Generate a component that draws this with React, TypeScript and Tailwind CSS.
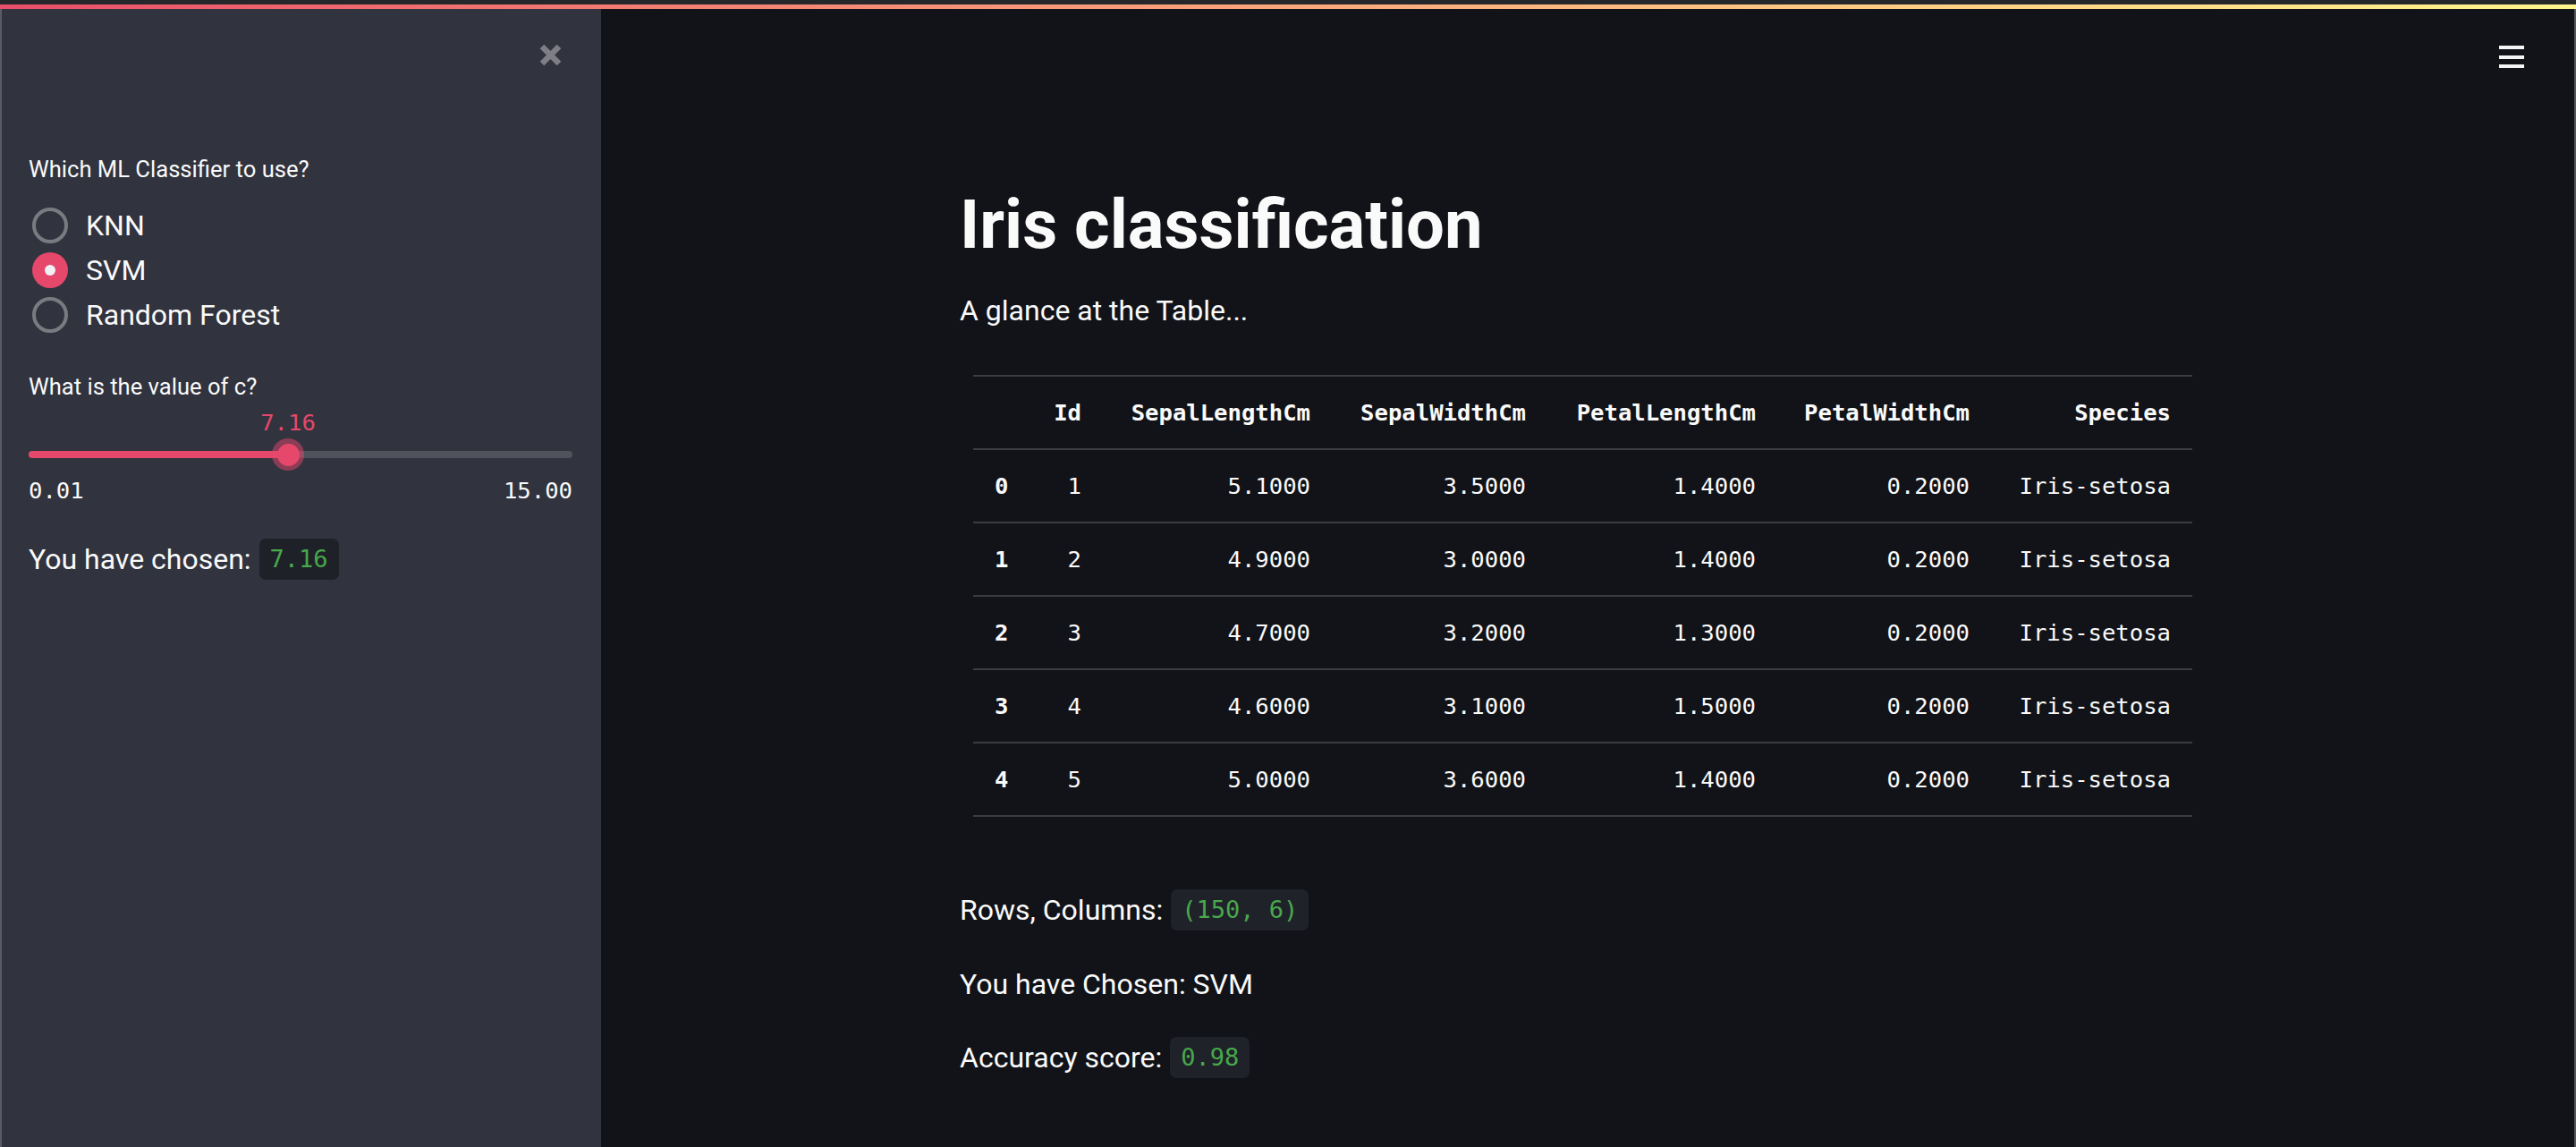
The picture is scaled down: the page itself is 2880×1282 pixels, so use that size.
import { useState } from "react";

const columns = ["Id", "SepalLengthCm", "SepalWidthCm", "PetalLengthCm", "PetalWidthCm", "Species"];
const colWidths = ["w-[58px]", "w-[87px]", "w-[256px]", "w-[241px]", "w-[257px]", "w-[239px]", "w-[225px]"];

const rows = [
  [1, "5.1000", "3.5000", "1.4000", "0.2000", "Iris-setosa"],
  [2, "4.9000", "3.0000", "1.4000", "0.2000", "Iris-setosa"],
  [3, "4.7000", "3.2000", "1.3000", "0.2000", "Iris-setosa"],
  [4, "4.6000", "3.1000", "1.5000", "0.2000", "Iris-setosa"],
  [5, "5.0000", "3.6000", "1.4000", "0.2000", "Iris-setosa"],
];

const classifiers = ["KNN", "SVM", "Random Forest"];

function Code({ children, dark }: { children: React.ReactNode; dark?: boolean }) {
  return (
    <span
      className={`ml-[9px] inline-flex h-[46px] items-center rounded-[7px] px-[12px] font-['DejaVu_Sans_Mono',monospace] text-[27px] text-[#48a84c] ${
        dark ? "bg-[#1f2128]" : "bg-[#1f2229]"
      }`}
    >
      {children}
    </span>
  );
}

function Sidebar() {
  const [choice, setChoice] = useState("SVM");
  const min = 0.01;
  const max = 15;
  const value = 7.16;
  const pct = ((value - min) / (max - min)) * 100;

  return (
    <aside className="flex w-[672px] shrink-0 flex-col border-l-2 border-[#5a5b62] bg-[#31333e] pl-[30px] pr-[32px]">
      <div className="flex justify-end pr-[11px] pt-[38px]">
        <svg width="27" height="27" viewBox="0 0 27 27" className="text-[#7e7f86]">
          <path d="M4 4 L23 23 M23 4 L4 23" stroke="currentColor" strokeWidth="6.5" strokeLinecap="butt" />
        </svg>
      </div>

      <div className="mt-[96px] text-[25.6px] leading-[36px] text-[#fafafa]">Which ML Classifier to use?</div>

      <div className="mt-[20px] flex flex-col">
        {classifiers.map((c) => (
          <label key={c} className="flex h-[50px] cursor-pointer items-center" onClick={() => setChoice(c)}>
            <span
              className={`ml-[4px] flex h-[40px] w-[40px] items-center justify-center rounded-full ${
                choice === c ? "bg-[#e5486b]" : "border-[4px] border-[#7a7b81]"
              }`}
            >
              {choice === c && <span className="h-[12px] w-[12px] rounded-full bg-[#f0f0f5]" />}
            </span>
            <span className="ml-[20px] text-[32px] leading-[48px] text-[#fafafa]">{c}</span>
          </label>
        ))}
      </div>

      <div className="mt-[37px] text-[25.6px] leading-[36px] text-[#fafafa]">What is the value of c?</div>

      <div className="relative h-[40px]">
        <span
          className="absolute top-[7px] -translate-x-1/2 font-['DejaVu_Sans_Mono',monospace] text-[25.6px] leading-[30px] text-[#e5486b]"
          style={{ left: `${pct}%` }}
        >
          7.16
        </span>
      </div>
      <div className="relative flex h-[36px] items-center">
        <div className="h-[8px] w-full rounded-full bg-[#50525c]" />
        <div className="absolute left-0 h-[8px] rounded-full bg-[#e5486b]" style={{ width: `${pct}%` }} />
        <div
          className="absolute top-1/2 flex h-[36px] w-[36px] -translate-x-1/2 -translate-y-1/2 items-center justify-center rounded-full bg-[#e5486b]/50"
          style={{ left: `${pct}%` }}
        >
          <div className="h-[25px] w-[25px] rounded-full bg-[#e5486b]" />
        </div>
      </div>
      <div className="mt-[7px] flex justify-between font-['DejaVu_Sans_Mono',monospace] text-[25.6px] leading-[30px] text-[#fafafa]">
        <span>0.01</span>
        <span>15.00</span>
      </div>

      <div className="mt-[38px] flex h-[48px] items-center text-[32px] text-[#fafafa]">
        You have chosen:
        <Code dark>7.16</Code>
      </div>
    </aside>
  );
}

function DataTable() {
  return (
    <table className="ml-[15px] table-fixed border-separate border-spacing-0 font-['DejaVu_Sans_Mono',monospace] text-[25.6px] text-[#fafafa]">
      <colgroup>
        {colWidths.map((w, i) => (
          <col key={i} className={w} />
        ))}
      </colgroup>
      <thead>
        <tr>
          <th className="h-[84px] border-y-2 border-[#3b3c42]" />
          {columns.map((c) => (
            <th key={c} className="h-[84px] border-y-2 border-[#3b3c42] pr-[24px] text-right font-semibold">
              {c}
            </th>
          ))}
        </tr>
      </thead>
      <tbody>
        {rows.map((r, i) => (
          <tr key={i}>
            <th className="h-[82px] border-b-2 border-[#3b3c42] pl-[24px] text-left font-semibold">{i}</th>
            {r.map((v, j) => (
              <td key={j} className="h-[82px] border-b-2 border-[#3b3c42] pr-[24px] text-right">
                {v}
              </td>
            ))}
          </tr>
        ))}
      </tbody>
    </table>
  );
}

export default function App() {
  return (
    <div className="flex h-[1282px] w-full flex-col overflow-hidden bg-[#111318] font-['Roboto',sans-serif]">
      <div className="h-[5px] shrink-0 bg-[#26272a]" />
      <div className="h-[5px] shrink-0 bg-gradient-to-r from-[#e84e69] to-[#fdf58c]" />
      <div className="flex flex-1">
        <Sidebar />
        <main className="flex flex-1 flex-col border-r-2 border-[#55565c]">
          <div className="flex justify-end pr-[56px] pt-[41px]">
            <div className="flex flex-col gap-[6.5px]">
              <span className="h-[4px] w-[28px] bg-[#f5f5f5]" />
              <span className="h-[4px] w-[28px] bg-[#f5f5f5]" />
              <span className="h-[4px] w-[28px] bg-[#f5f5f5]" />
            </div>
          </div>

          <div className="mx-auto mt-[130px] flex w-[1404px] flex-col text-[#fafafa]">
            <h1 className="text-[76px] font-bold leading-[90px]">Iris classification</h1>
            <p className="mt-[27px] text-[32px] leading-[48px]">A glance at the Table...</p>

            <div className="mt-[48px]">
              <DataTable />
            </div>

            <div className="mt-[80px] flex h-[48px] items-center text-[32px]">
              Rows, Columns:
              <Code>(150, 6)</Code>
            </div>
            <p className="mt-[35px] text-[32px] leading-[48px]">You have Chosen: SVM</p>
            <div className="mt-[34px] flex h-[48px] items-center text-[32px]">
              Accuracy score:
              <Code>0.98</Code>
            </div>
          </div>
        </main>
      </div>
    </div>
  );
}
